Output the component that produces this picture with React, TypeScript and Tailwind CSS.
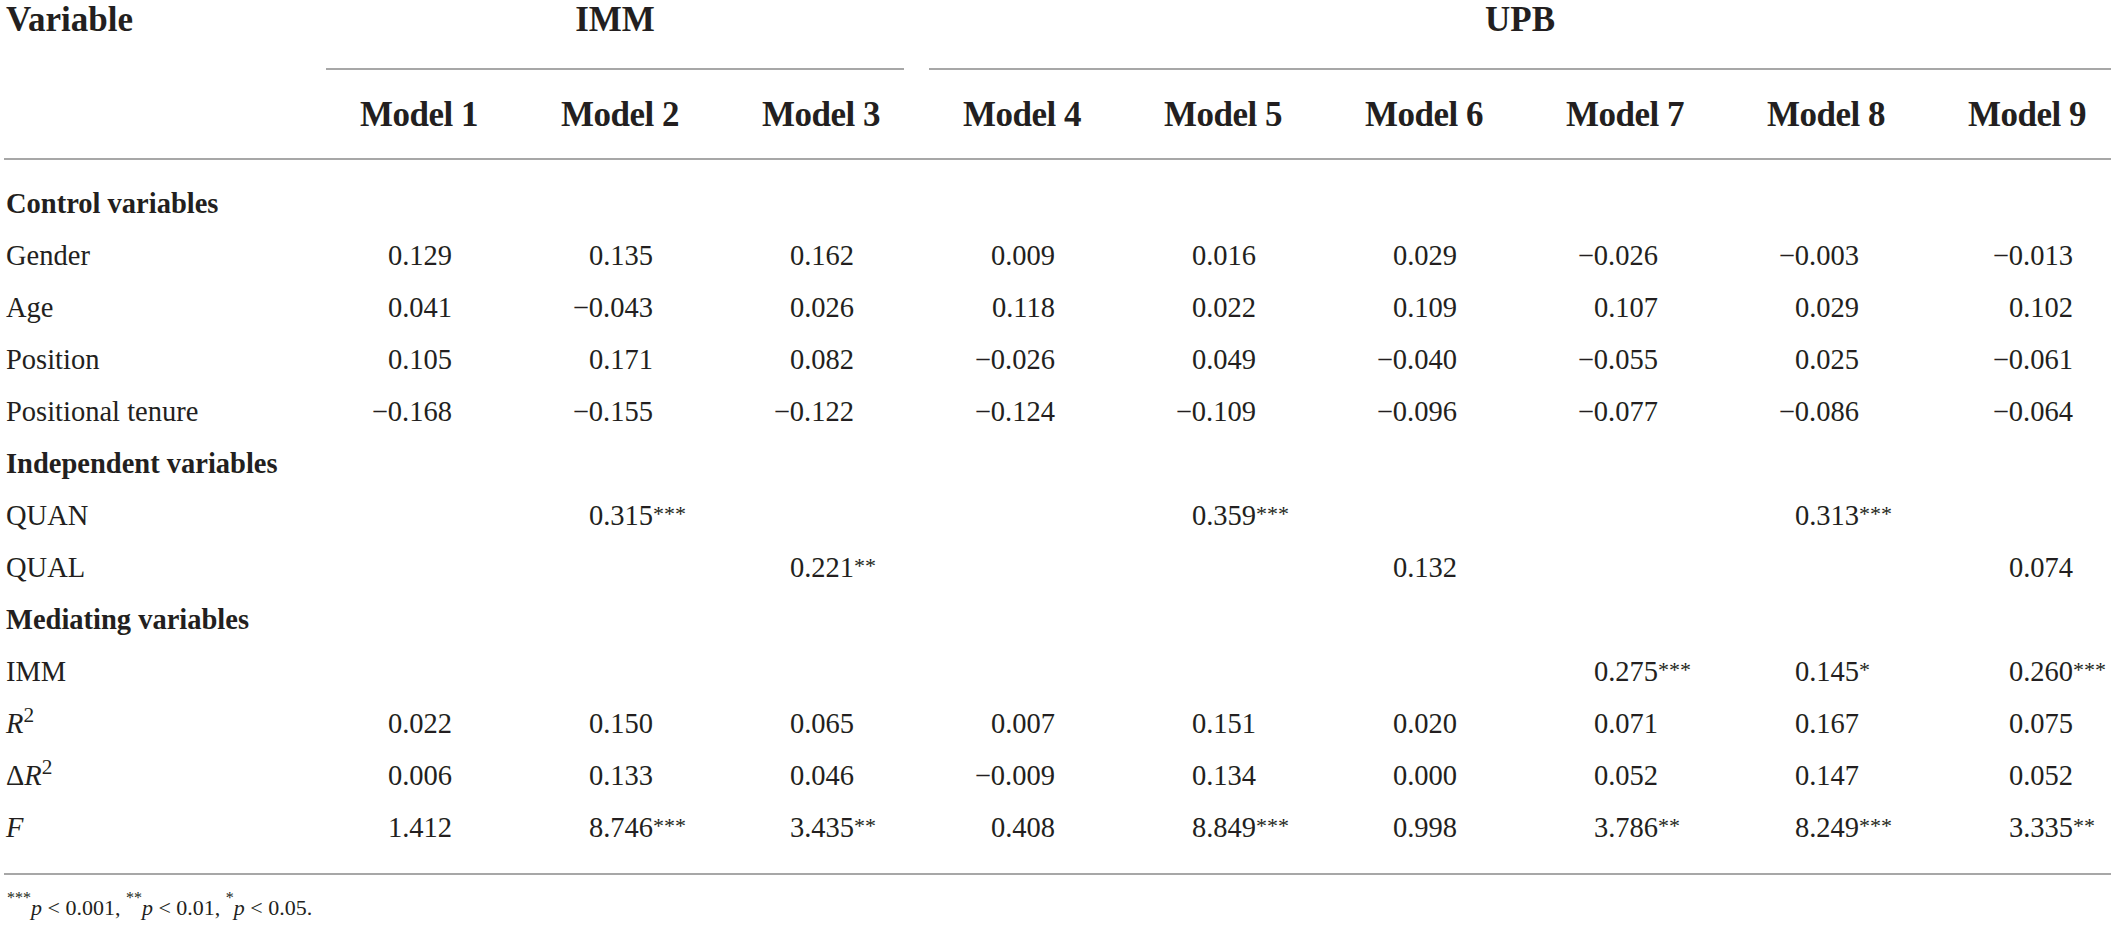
const rows: { label: React.ReactNode; vals?: string[]; head?: boolean }[] = [
  { label: "Control variables", head: true },
  { label: "Gender", vals: ["0.129", "0.135", "0.162", "0.009", "0.016", "0.029", "−0.026", "−0.003", "−0.013"] },
  { label: "Age", vals: ["0.041", "−0.043", "0.026", "0.118", "0.022", "0.109", "0.107", "0.029", "0.102"] },
  { label: "Position", vals: ["0.105", "0.171", "0.082", "−0.026", "0.049", "−0.040", "−0.055", "0.025", "−0.061"] },
  { label: "Positional tenure", vals: ["−0.168", "−0.155", "−0.122", "−0.124", "−0.109", "−0.096", "−0.077", "−0.086", "−0.064"] },
  { label: "Independent variables", head: true },
  { label: "QUAN", vals: ["", "0.315***", "", "", "0.359***", "", "", "0.313***", ""] },
  { label: "QUAL", vals: ["", "", "0.221**", "", "", "0.132", "", "", "0.074"] },
  { label: "Mediating variables", head: true },
  { label: "IMM", vals: ["", "", "", "", "", "", "0.275***", "0.145*", "0.260***"] },
  {
    label: (
      <>
        <i>R</i>
        <sup>2</sup>
      </>
    ),
    vals: ["0.022", "0.150", "0.065", "0.007", "0.151", "0.020", "0.071", "0.167", "0.075"],
  },
  {
    label: (
      <>
        Δ<i>R</i>
        <sup>2</sup>
      </>
    ),
    vals: ["0.006", "0.133", "0.046", "−0.009", "0.134", "0.000", "0.052", "0.147", "0.052"],
  },
  {
    label: <i>F</i>,
    vals: ["1.412", "8.746***", "3.435**", "0.408", "8.849***", "0.998", "3.786**", "8.249***", "3.335**"],
  },
];

const models = ["Model 1", "Model 2", "Model 3", "Model 4", "Model 5", "Model 6", "Model 7", "Model 8", "Model 9"];

function Cell({ v, last }: { v: string; last: boolean }) {
  const num = v.replace(/\*+$/, "");
  const stars = v.slice(num.length);
  return (
    <div className="flex justify-end">
      <span>{num}</span>
      <span className={last ? "w-[13px] whitespace-nowrap" : "w-[26px] whitespace-nowrap"}>
        {stars && <span className="relative -top-[4px] text-[22px]">{stars}</span>}
      </span>
    </div>
  );
}

export default function App() {
  return (
    <div className="w-[2117px] h-[926px] bg-white text-[#231f20] font-['Liberation_Serif',serif] overflow-hidden">
      {/* top header */}
      <div className="flex h-[40px] leading-[40px] text-[35px] font-bold">
        <div className="w-[326px] pl-[6px]">Variable</div>
        <div className="w-[578px] text-center">IMM</div>
        <div className="w-[25px]" />
        <div className="flex-1 mr-[6px] text-center">UPB</div>
      </div>
      <div className="flex mt-[28px] h-[2px]">
        <div className="ml-[326px] w-[578px] bg-[#a7a7a7]" />
        <div className="ml-[25px] flex-1 mr-[6px] bg-[#a7a7a7]" />
      </div>
      <div className="grid grid-cols-[277px_repeat(9,201px)] mt-[25px] h-[40px] leading-[40px] text-[35px] font-bold">
        <div />
        {models.map((m) => (
          <div key={m} className="text-right tracking-[-0.5px]">
            {m}
          </div>
        ))}
      </div>
      <div className="mt-[23px] h-[2px] ml-[4px] mr-[6px] bg-[#a7a7a7]" />

      {/* body */}
      <div className="mt-[17.5px] text-[28.5px] leading-[52px]">
        {rows.map((r, i) => (
          <div key={i} className="grid grid-cols-[277px_repeat(9,201px)] h-[52px]">
            <div className={r.head ? "pl-[6px] font-bold whitespace-nowrap" : "pl-[6px] whitespace-nowrap"}>{r.label}</div>
            {r.vals?.map((v, j) => <Cell key={j} v={v} last={j === 8} />)}
          </div>
        ))}
      </div>
      <div className="mt-[19px] h-[2px] ml-[4px] mr-[6px] bg-[#a7a7a7]" />

      <div className="mt-[17px] pl-[7px] text-[22px] leading-[32px]">
        <span className="relative -top-[12px] text-[16px]">***</span>
        <i>p</i> &lt; 0.001, <span className="relative -top-[12px] text-[16px]">**</span>
        <i>p</i> &lt; 0.01, <span className="relative -top-[12px] text-[16px]">*</span>
        <i>p</i> &lt; 0.05.
      </div>
    </div>
  );
}
